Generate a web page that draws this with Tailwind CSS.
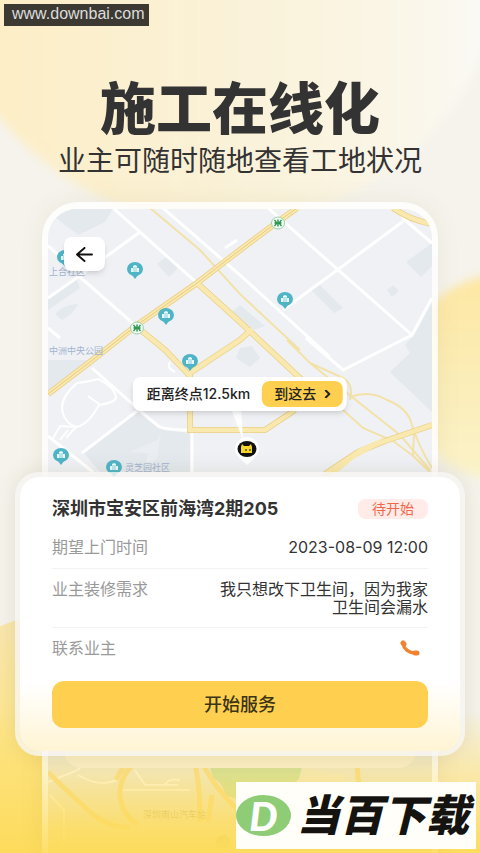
<!DOCTYPE html>
<html lang="zh-CN">
<head>
    <meta charset="UTF-8">
    <meta name="viewport" content="width=device-width, initial-scale=1.0">
    <title>施工在线化</title>
    <script src="https://cdn.jsdelivr.net/npm/@tailwindcss/browser@4"></script>
</head>
<body class="bg-[#f5f3ec] text-[#333333] font-['Inter','Noto_Sans_CJK_SC',sans-serif]">
    <div class="relative isolate flex flex-col min-h-screen overflow-hidden">
        <!-- background shapes -->
        <svg class="absolute inset-0 -z-10 w-full h-full" viewBox="0 0 480 853" preserveAspectRatio="none" aria-hidden="true">
            <defs>
                <linearGradient id="sun" x1="0" x2="480" y1="0" y2="0" gradientUnits="userSpaceOnUse">
                    <stop offset="0" stop-color="#fdeec6"/>
                    <stop offset="0.4" stop-color="#faf1d5"/>
                    <stop offset="0.8" stop-color="#faf5e5"/>
                    <stop offset="1" stop-color="#faf9f4"/>
                </linearGradient>
                <linearGradient id="ball" x1="0" x2="0" y1="0" y2="1">
                    <stop offset="0" stop-color="#fee7a2"/>
                    <stop offset="0.6" stop-color="#fbeebb"/>
                    <stop offset="1" stop-color="#faf3c9"/>
                </linearGradient>
                <linearGradient id="hill" x1="0" x2="0" y1="612" y2="853" gradientUnits="userSpaceOnUse">
                    <stop offset="0" stop-color="#f9e6b0"/>
                    <stop offset="0.5" stop-color="#fde68f"/>
                    <stop offset="1" stop-color="#fddc5c"/>
                </linearGradient>
                <linearGradient id="floor" x1="0" x2="0" y1="710" y2="853" gradientUnits="userSpaceOnUse">
                    <stop offset="0" stop-color="#fddc5c" stop-opacity="0"/>
                    <stop offset="0.5" stop-color="#fddf70" stop-opacity="0.6"/>
                    <stop offset="1" stop-color="#fddc5c"/>
                </linearGradient>
                <filter id="soft"><feGaussianBlur stdDeviation="5"/></filter>
            </defs>
            <circle cx="222" cy="-62" r="286" fill="url(#sun)" filter="url(#soft)"/>
            <circle cx="505" cy="377" r="103" fill="url(#ball)" filter="url(#soft)"/>
            <circle cx="90" cy="840" r="232" fill="url(#hill)"/>
            <rect y="710" width="480" height="143" fill="url(#floor)"/>
        </svg>

        <a href="#" class="absolute left-1 top-1 pl-2 pr-1 h-[22px] leading-[20px] bg-[#3b3932] text-[#dddddd] text-base font-['Liberation_Sans',sans-serif]">www.downbai.com</a>

        <header class="pt-[77px] pb-6 text-center">
            <h1 class="text-[56px] leading-[64px] font-black">施工在线化</h1>
            <p class="mt-1 text-[28px] leading-[33px] whitespace-nowrap">业主可随时随地查看工地状况</p>
        </header>

        <main class="grid flex-1">
            <!-- phone with the map -->
            <section class="relative col-start-1 row-start-1 mx-[42px] border-x-[6px] border-t-[7px] border-white/80 rounded-t-[36px] shadow-[0_0_24px_rgba(120,100,40,0.08)]">
                <div class="absolute inset-0 overflow-hidden rounded-t-[29px] bg-[#eff1f5]">
                    <svg class="w-full h-full" viewBox="48 209 384 644" preserveAspectRatio="xMidYMin slice" aria-hidden="true">
                        <defs>
                            <g id="poi">
                                <path d="M-3 6 L0 10 L3 6Z" fill="#4fb4c6"/>
                                <ellipse rx="8" ry="7" fill="#4fb4c6"/>
                                <path d="M-4 3V-1H-2V-3L0-4L2-3V-1H4V3Z" fill="#e9fbff"/>
                                <path d="M-1-2V3M1-2V3" stroke="#4fb4c6" stroke-width="0.6"/>
                            </g>
                            <g id="metro">
                                <ellipse rx="6.5" ry="6" fill="#f2fbf3" stroke="#9fd0a8"/>
                                <path d="M0-3.500V3.500M-3.500-3Q-1.500-1-1.500 0Q-1.500 1-3.500 3M3.500-3Q1.500-1 1.500 0Q1.500 1 3.500 3M-3.500 0H3.500" fill="none" stroke="#23934a" stroke-width="1.400"/>
                            </g>
                            <linearGradient id="fade" x1="0" x2="0" y1="745" y2="853" gradientUnits="userSpaceOnUse">
                                <stop offset="0" stop-color="#f8e8ae" stop-opacity="0.3"/>
                                <stop offset="0.6" stop-color="#fce07a" stop-opacity="0.5"/>
                                <stop offset="1" stop-color="#fddc5c" stop-opacity="0.9"/>
                            </linearGradient>
                        </defs>
                        <!-- blocks -->
                        <g fill="#e4e9ee">
                            <path d="M60 209H113L105 222L78 235L56 218Z"/>
                            <path d="M157 264L166 257L178 268L169 277Z"/>
                            <path d="M55 314Q62 305 78 304Q74 313 62 320Z"/>
                            <path d="M311 290L320 285L343 308L334 313Z"/>
                            <path d="M387 290L393 285L399 291L392 297Z"/>
                            <path d="M406 262L432 243V266L421 277Z"/>
                            <path d="M432 302V412L390 372L410 353L405 345L415 334Z"/>
                            <path d="M232 312L240 305L265 326L254 330L248 325Z"/>
                            <path d="M240 348L252 346L260 358L250 367L236 358Z"/>
                            <path d="M48 360H90L62 382L48 390Z"/>
                            <path d="M48 299L76 279L80 288L48 310Z"/>
                            <path d="M137 412L162 430L190 433V472H100L84 453Z"/>
                        </g>
                        <path d="M130 452L157 440L161 431L157 458Q150 464 146 462L148 453Z" fill="#eaeef2"/>
                        <!-- minor roads -->
                        <g fill="none" stroke="#ffffff" stroke-width="3">
                            <path d="M113 208L197 283M48 246L62 258M48 298L78 277L140 232M80 277L137 327M163 208L240 275L330 357"/>
                            <path d="M268 208L412 335L432 298M283 310L405 220L400 214M405 220L432 243M412 335L343 370L306 338"/>
                            <path d="M92 368L137 408L158 426Q165 430 190 430M137 411L82 453M192 432V472M48 436L93 472M225 248L237 240M48 328L60 338"/>
                        </g>
                        <g fill="none" stroke="#ffffff" stroke-width="2">
                            <path d="M77 383Q62 396 62 408Q63 422 76 427Q88 425 99 405Q118 402 116 396Q113 386 98 379Q88 382 77 383M99 404L88 396"/>
                            <path d="M52 440L60 426L76 427L66 438M60 440L68 430M175 372Q166 368 170 362"/>
                        </g>
                        <!-- thin yellow roads -->
                        <g fill="none" stroke="#f3e2a8" stroke-width="2">
                            <path d="M150 208L200 250L240 294L300 350M287 340L310 363L343 378Q354 384 350 400M310 363L352 397L400 435L430 470"/>
                            <path d="M350 397Q370 390 387 400Q408 408 412 425Q418 445 432 468M343 410L363 428L393 441L412 455L430 472M413 455L414 433"/>
                        </g>
                        <!-- main roads -->
                        <g fill="none" stroke="#e9cf87" stroke-width="6">
                            <path d="M48 394L90 362L137 325L197 283L240 250L276 223L297 208M393 208Q410 220 432 224"/>
                            <path d="M137 327L165 350L190 376V430H265L295 410M190 373L240 340L252 329M197 283L240 322L302 380"/>
                            <path d="M325 474L358 452L385 441L432 425"/>
                        </g>
                        <g fill="none" stroke="#fae9ae" stroke-width="4.500">
                            <path d="M137 327L165 350L190 376V430H265L295 410M190 373L240 340L252 329M197 283L240 322L302 380"/>
                            <path d="M48 394L90 362L137 325L197 283L240 250L276 223L297 208M393 208Q410 220 432 224"/>
                            <path d="M325 474L358 452L385 441L432 425"/>
                        </g>
                        <path d="M330 474L358 449L385 437L375 447L352 460L336 474Z" fill="#fae9ae"/>
                        <path d="M48 394L90 362L137 325L197 283L240 250L276 223L297 208" fill="none" stroke="#e6cb84"/>
                        <!-- labels -->
                        <g fill="#a3b3cf" font-size="9" class="font-['Noto_Sans_CJK_SC',sans-serif]">
                            <text x="49" y="275">上合社区</text>
                            <text x="49" y="354">中洲中央公园</text>
                            <text x="125" y="471">灵芝园社区</text>
                        </g>
                        <use href="#poi" x="65" y="257"/>
                        <use href="#poi" x="135" y="269"/>
                        <use href="#poi" x="166" y="315"/>
                        <use href="#poi" x="285" y="299"/>
                        <use href="#poi" x="190" y="361"/>
                        <use href="#poi" x="61" y="455"/>
                        <use href="#poi" x="114" y="467"/>
                        <use href="#metro" x="137" y="328"/>
                        <use href="#metro" x="278" y="223"/>
                        <!-- lower part of the map -->
                        <rect x="48" y="740" width="384" height="113" fill="#eceade"/>
                        <path d="M208 760H304L298 782L270 790L243 800L226 796Q222 782 213 778Z" fill="#b9dd9a"/>
                        <path d="M305 768L330 773L345 775L342 800H270L298 780Z" fill="#f1ebd0"/>
                        <g fill="none" stroke="#ffffff" stroke-width="2">
                            <path d="M48 782L78 770L84 760M78 775Q100 788 117 780M50 795L64 810V853M120 790H190M135 770L145 785H178M164 786Q168 778 180 780"/>
                        </g>
                        <g fill="none" stroke="#f8d777" stroke-width="5">
                            <path d="M48 772L62 786L90 812Q105 826 130 828M133 764Q118 780 120 797Q124 818 138 824M124 765L116 780M195 764Q200 785 200 822M203 764Q215 790 250 822M357 764L359 790M212 795L208 822"/>
                        </g>
                        <text x="143" y="818" font-size="9" fill="#a8924a" class="font-['Noto_Sans_CJK_SC',sans-serif]">深圳南山汽车站</text>
                        <circle cx="223" cy="842" r="7" fill="#a9b060"/>
                        <rect x="48" y="740" width="384" height="113" fill="url(#fade)"/>
                        <!-- callout tail and vehicle pin -->
                        <path d="M230 406L243 440L241 406Z" fill="#ffffff"/>
                        <path d="M247 437C254 437 259 443 259 449C259 456 251 460 247 465C243 460 235 456 235 449C235 443 240 437 247 437Z" fill="#ffffff"/>
                        <ellipse cx="247" cy="449" rx="9.500" ry="8" fill="#111111"/>
                        <path d="M241 447L242 444L244 446H249L251 444L252 447V453H241Z" fill="#f6d52c"/>
                        <path d="M246 449V451M250 449V451" stroke="#111111"/>
                    </svg>
                </div>

                <button type="button" aria-label="返回" class="absolute left-4 top-7 flex items-center justify-center w-[41px] h-[34px] rounded-lg bg-white shadow-md">
                    <svg class="w-[17px] h-[15px]" viewBox="0 0 18 16" fill="none" stroke="#111111" stroke-width="2" stroke-linecap="round" stroke-linejoin="round">
                        <path d="M17 8H1M9 1L1 8L9 15"/>
                    </svg>
                </button>

                <!-- distance callout -->
                <div class="absolute left-1/2 top-[168px] -translate-x-1/2 flex items-center gap-3 h-[34px] pl-[14px] pr-1 rounded-lg bg-white shadow-md whitespace-nowrap text-sm font-medium text-[#222222]">
                    <span>距离终点12.5km</span>
                    <button type="button" class="flex items-center gap-2 h-[26px] px-3 rounded-lg bg-[#ffd04f] text-sm font-medium">
                        到这去
                        <svg class="w-[7px] h-2" viewBox="0 0 6 8" fill="none" stroke="#222222" stroke-width="2"><path d="M1 0L5 4L1 8"/></svg>
                    </button>
                </div>

                <!-- the frame melts into the floor -->
                <div class="absolute -inset-x-[6px] bottom-0 h-[97px] bg-linear-to-b from-[#fddc5c]/5 to-[#fddc5c]/90"></div>
                <div class="absolute inset-x-4 top-[540px] h-[19px] rounded-b-[18px] bg-[#faedc0]"></div>
            </section>

            <!-- order card -->
            <section class="relative col-start-1 row-start-1 self-start mx-[15px] mt-[270px] mb-[97px] rounded-[24px] border-[5px] border-[#f6f5f2]/80 bg-clip-padding bg-linear-to-b from-white from-75% to-[#fff4d3] px-8 pt-[21px] pb-[23px] shadow-[0_0_20px_rgba(120,100,40,0.14)]">
                <div class="flex items-center justify-between">
                    <h2 class="text-lg leading-[22px] font-bold">深圳市宝安区前海湾2期205</h2>
                    <span class="h-5 px-[14px] rounded-[8px] bg-[#ffece8] text-sm leading-[19px] text-[#f2664a]">待开始</span>
                </div>
                <dl class="text-base leading-[18px]">
                    <div class="flex justify-between pt-[18px] pb-3 border-b border-[#f3f3f3]">
                        <dt class="text-[#999999]">期望上门时间</dt>
                        <dd>2023-08-09 12:00</dd>
                    </div>
                    <div class="flex justify-between py-[11px] border-b border-[#f3f3f3]">
                        <dt class="text-[#999999]">业主装修需求</dt>
                        <dd class="w-[210px] text-right">我只想改下卫生间，因为我家卫生间会漏水</dd>
                    </div>
                    <div class="flex items-center justify-between pt-[11px] pb-6">
                        <dt class="text-[#999999]">联系业主</dt>
                        <dd class="flex pr-2">
                            <a href="tel:" aria-label="联系业主">
                                <svg class="w-5 h-4" viewBox="0 0 20 16" fill="none" stroke="#f0832f" stroke-linecap="round">
                                    <path d="M3 4C4 9 9 13 15 13" stroke-width="3.500"/>
                                    <path d="M3 3L4 4M15 13L17 13" stroke-width="5"/>
                                </svg>
                            </a>
                        </dd>
                    </div>
                </dl>
                <button type="button" class="w-full h-[47px] rounded-xl bg-[#ffd04f] text-lg font-medium text-[#3b3415]">开始服务</button>
            </section>
        </main>

        <div class="absolute right-1 bottom-1 flex items-center gap-[6px] w-[240px] h-[67px] bg-[#fffef8] whitespace-nowrap">
            <span class="flex items-center justify-center w-[55px] h-[41px] rounded-[50%] bg-[#8fcc76] text-white text-[40px] leading-none font-black italic font-['Lato',sans-serif]">D</span>
            <b class="text-[43px] leading-none font-black italic text-[#15130f]">当百下载</b>
        </div>
    </div>
</body>
</html>
